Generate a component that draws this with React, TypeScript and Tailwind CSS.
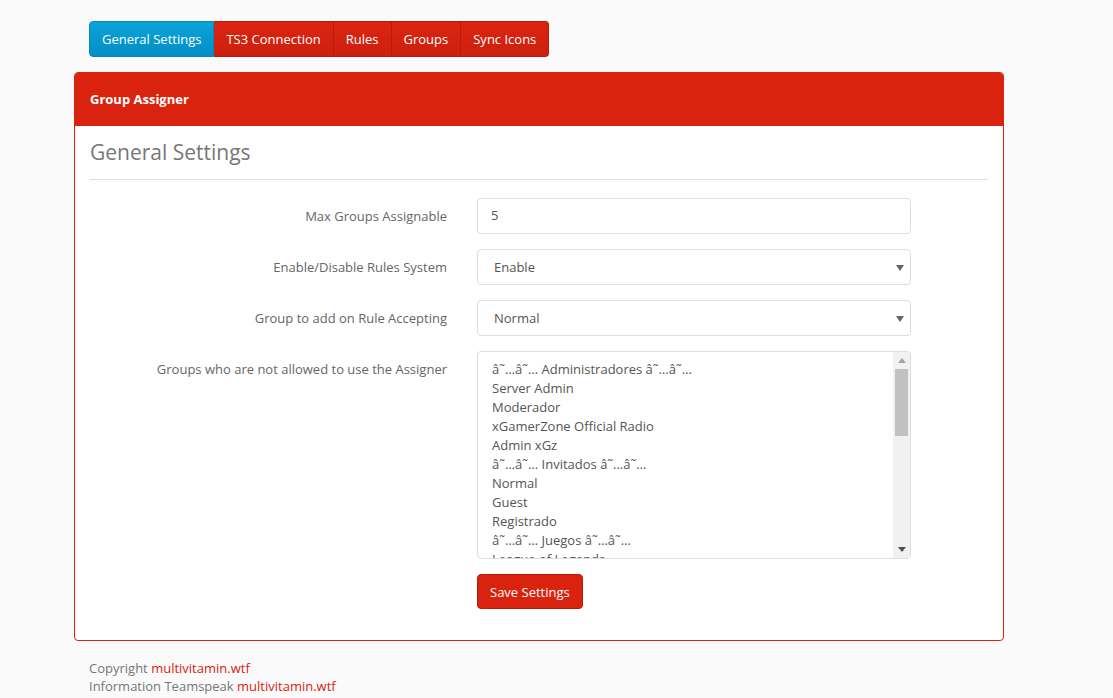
import React from "react";

const tabs = ["General Settings", "TS3 Connection", "Rules", "Groups", "Sync Icons"];
const groups = [
  "â˜…â˜… Administradores â˜…â˜…",
  "Server Admin",
  "Moderador",
  "xGamerZone Official Radio",
  "Admin xGz",
  "â˜…â˜… Invitados â˜…â˜…",
  "Normal",
  "Guest",
  "Registrado",
  "â˜…â˜… Juegos â˜…â˜…",
  "League of Legends",
];

function Caret() {
  return (
    <svg width="8" height="6" viewBox="0 0 8 6" className="shrink-0">
      <path d="M0 0 L8 0 L4 6 Z" fill="#666" />
    </svg>
  );
}

export default function App() {
  return (
    <div
      className="min-h-[698px] w-full bg-[#fafafa] text-[13px] text-[#777]"
      style={{ fontFamily: '"Open Sans", "Noto Sans", sans-serif' }}
    >
      <div className="w-[960px] pl-[74px] pt-[21px]">
        {/* Tabs */}
        <div className="ml-[15px] flex h-[36px] w-fit text-white">
          <div className="flex items-center rounded-l-[4px] border border-[#0588bf] bg-gradient-to-b from-[#0aa3d8] to-[#038fc6] px-[12px] pt-[2px]">
            {tabs[0]}
          </div>
          {tabs.slice(1).map((t, i) => (
            <div
              key={t}
              className={
                "flex items-center border-y border-r border-[#b71c0b] bg-gradient-to-b from-[#dc2410] to-[#cc200e] px-[12px] pt-[2px] " +
                (i === tabs.length - 2 ? "rounded-r-[4px]" : "")
              }
            >
              {t}
            </div>
          ))}
        </div>

        {/* Panel */}
        <div className="mt-[15px] w-[930px] overflow-hidden rounded-[4px] border border-[#d9230f] bg-white">
          <div className="flex h-[53px] items-center bg-[#d9230f] px-[15px] text-[13px] font-bold text-white">
            Group Assigner
          </div>
          <div className="px-[15px] pb-[31px] pt-[11px]">
            <h2 className="text-[21px] leading-[30px] text-[#777]">General Settings</h2>
            <div className="mt-[12px] h-px w-[898px] bg-[#dddddd]" />

            <div className="mt-[18px] flex flex-col gap-[15px]">
              <div className="flex items-start">
                <div className="flex h-[36px] w-[357px] items-center justify-end pt-[2px] text-[#666]">Max Groups Assignable</div>
                <div className="ml-[30px] flex h-[36px] w-[434px] items-center rounded-[4px] border border-[#dddddd] bg-white px-[13px] text-[#555]">
                  5
                </div>
              </div>
              <div className="flex items-start">
                <div className="flex h-[36px] w-[357px] items-center justify-end pt-[2px] text-[#666]">Enable/Disable Rules System</div>
                <div className="ml-[30px] flex h-[36px] w-[434px] items-center justify-between rounded-[4px] border border-[#dddddd] bg-white pl-[16px] pr-[6px] pt-px text-[#555]">
                  <span>Enable</span>
                  <Caret />
                </div>
              </div>
              <div className="flex items-start">
                <div className="flex h-[36px] w-[357px] items-center justify-end pt-[2px] text-[#666]">Group to add on Rule Accepting</div>
                <div className="ml-[30px] flex h-[36px] w-[434px] items-center justify-between rounded-[4px] border border-[#dddddd] bg-white pl-[16px] pr-[6px] pt-px text-[#555]">
                  <span>Normal</span>
                  <Caret />
                </div>
              </div>
              <div className="flex items-start">
                <div className="flex h-[36px] w-[357px] items-center justify-end pt-[2px] text-[#666]">
                  Groups who are not allowed to use the Assigner
                </div>
                <div className="ml-[30px] flex h-[208px] w-[434px] overflow-hidden rounded-[4px] border border-[#dddddd] bg-white text-[#555]">
                  <div className="flex-1 overflow-hidden pl-[14px] pt-[8px]">
                    {groups.map((g) => (
                      <div key={g} className="h-[19px] whitespace-nowrap leading-[19px]">
                        {g}
                      </div>
                    ))}
                  </div>
                  <div className="flex w-[17px] flex-col items-center bg-[#f1f1f1]">
                    <div className="flex h-[17px] items-center justify-center">
                      <svg width="8" height="5" viewBox="0 0 8 5">
                        <path d="M0 5 L8 5 L4 0 Z" fill="#a3a3a3" />
                      </svg>
                    </div>
                    <div className="h-[67px] w-[13px] bg-[#c1c1c1]" />
                    <div className="flex-1" />
                    <div className="flex h-[17px] items-center justify-center">
                      <svg width="8" height="5" viewBox="0 0 8 5">
                        <path d="M0 0 L8 0 L4 5 Z" fill="#505050" />
                      </svg>
                    </div>
                  </div>
                </div>
              </div>
              <div className="flex">
                <div className="w-[357px]" />
                <button className="ml-[30px] h-[35px] rounded-[4px] border border-[#b71c0b] bg-[#d9230f] px-[12px] pt-[2px] text-[13px] text-white">
                  Save Settings
                </button>
              </div>
            </div>
          </div>
        </div>

        {/* Footer */}
        <div className="ml-[15px] mt-[18px] leading-[18px] text-[#777]">
          <div>
            Copyright <span className="text-[#d9230f]">multivitamin.wtf</span>
          </div>
          <div>
            Information Teamspeak <span className="text-[#d9230f]">multivitamin.wtf</span>
          </div>
        </div>
      </div>
    </div>
  );
}
